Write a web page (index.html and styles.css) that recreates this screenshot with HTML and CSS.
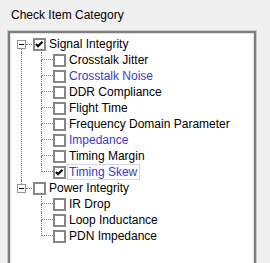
FILE: index.html
```html
<!DOCTYPE html>
<html lang="en">
<head>
  <meta charset="UTF-8" />
  <title>Check Item Category</title>
  <link rel="stylesheet" href="styles.css">
</head>
<body>

  <div class="title">Check Item Category</div>

  <div class="tree">
    <!-- Signal Integrity -->
    <div class="row">
      <span class="exp"><span class="stem"></span><span class="box"><i></i></span><span class="stem on"></span></span>
      <span class="hdots"></span>
      <span class="cb"><svg width="9" height="9"><polyline points="1,4 3,6.2 7.5,1.8" /></svg></span>
      <span class="label">Signal Integrity</span>
    </div>
    <div class="kids rail">
      <div class="row child"><span class="branch"><span class="up"></span><span class="down"></span></span><span class="cb"></span><span class="label">Crosstalk Jitter</span></div>
      <div class="row child"><span class="branch"><span class="up"></span><span class="down"></span></span><span class="cb"></span><span class="label blue">Crosstalk Noise</span></div>
      <div class="row child"><span class="branch"><span class="up"></span><span class="down"></span></span><span class="cb"></span><span class="label">DDR Compliance</span></div>
      <div class="row child"><span class="branch"><span class="up"></span><span class="down"></span></span><span class="cb"></span><span class="label">Flight Time</span></div>
      <div class="row child"><span class="branch"><span class="up"></span><span class="down"></span></span><span class="cb"></span><span class="label">Frequency Domain Parameter</span></div>
      <div class="row child"><span class="branch"><span class="up"></span><span class="down"></span></span><span class="cb"></span><span class="label blue">Impedance</span></div>
      <div class="row child"><span class="branch"><span class="up"></span><span class="down"></span></span><span class="cb"></span><span class="label">Timing Margin</span></div>
      <div class="row child"><span class="branch last"><span class="up"></span><span class="down"></span></span><span class="cb"><svg width="9" height="9"><polyline points="1,4 3,6.2 7.5,1.8" /></svg></span><span class="label blue focus">Timing Skew</span></div>
    </div>

    <!-- Power Integrity -->
    <div class="row">
      <span class="exp"><span class="stem on"></span><span class="box"><i></i></span><span class="stem"></span></span>
      <span class="hdots"></span>
      <span class="cb"></span>
      <span class="label">Power Integrity</span>
    </div>
    <div class="kids">
      <div class="row child"><span class="branch"><span class="up"></span><span class="down"></span></span><span class="cb"></span><span class="label">IR Drop</span></div>
      <div class="row child"><span class="branch"><span class="up"></span><span class="down"></span></span><span class="cb"></span><span class="label">Loop Inductance</span></div>
      <div class="row child"><span class="branch last"><span class="up"></span><span class="down"></span></span><span class="cb"></span><span class="label">PDN Impedance</span></div>
    </div>
  </div>

</body>
</html>
```

FILE: styles.css
```css
body {
  font-family: "Liberation Sans", Arial, sans-serif;
  font-size: 12px;
  background: #f0f0f0;
  color: #000;
  margin: 0;
  padding: 7px 0 0 0;
  overflow: hidden;
}

.title {
  line-height: 16px;
  padding-left: 11px;
  margin-bottom: 7px;
}

.tree {
  margin-left: 7px;
  width: 250px;
  height: 250px;
  box-sizing: border-box;
  background: #fff;
  border: 1px solid #cdcdcd;
  box-shadow: inset 0 0 0 2px #7e7e7e, inset 0 0 0 3px #e0e0e0;
  padding-top: 5px;
}

.row {
  display: flex;
  align-items: center;
  height: 16px;
  white-space: nowrap;
}

/* expander with stems */
.exp {
  width: 9px;
  height: 16px;
  margin-left: 9px;
  display: flex;
  flex-direction: column;
  align-items: center;
}

.exp .stem {
  flex: 1;
  width: 0;
  border-left: 1px dotted transparent;
}

.exp .stem.on {
  border-left-color: #808080;
}

.exp .box {
  width: 9px;
  height: 9px;
  box-sizing: border-box;
  border: 1px solid #919191;
  background: #fff;
  display: flex;
  align-items: center;
  justify-content: center;
}

.exp .box i {
  width: 5px;
  height: 1px;
  background: #000;
}

.hdots {
  width: 6px;
  border-top: 1px dotted #808080;
  margin-right: 1px;
}

/* checkbox */
.cb {
  width: 13px;
  height: 13px;
  box-sizing: border-box;
  border: 2px solid #878787;
  background: #fff;
  display: flex;
  align-items: center;
  justify-content: center;
  flex-shrink: 0;
}

.cb svg polyline {
  fill: none;
  stroke: #000;
  stroke-width: 2.2;
}

.label {
  margin-left: 3px;
  line-height: 16px;
}

.blue {
  color: #3a3ac6;
}

.focus {
  margin-left: 1px;
  padding: 0 2px 0 1px;
  line-height: 14px;
  border: 1px solid #d3d3e6;
}

/* children */
.kids {
  margin-left: 13px;
  border-left: 1px dotted transparent;
}

.kids.rail {
  border-left-color: #808080;
}

.branch {
  width: 12px;
  height: 16px;
  margin-left: 19px;
  display: flex;
  flex-direction: column;
  box-sizing: border-box;
}

.branch .up {
  height: 8px;
  box-sizing: border-box;
  border-left: 1px dotted #808080;
  border-bottom: 1px dotted #808080;
}

.branch .down {
  flex: 1;
  border-left: 1px dotted #808080;
}

.branch.last .down {
  border-left-color: transparent;
}
```
